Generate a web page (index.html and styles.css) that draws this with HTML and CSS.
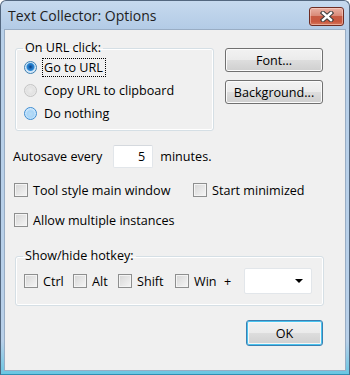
FILE: index.html
```html
<!DOCTYPE html>
<html>
<head>
<meta charset="utf-8">
<link rel="stylesheet" href="styles.css">
</head>
<body>
<div class="window">
  <div class="titlebar">
    <span class="title">Text Collector: Options</span>
    <div class="close">
      <svg width="14" height="11" viewBox="0 0 14 11">
        <path d="M3 2 L11 9 M11 2 L3 9" stroke="#3b3b3b" stroke-width="4.4" stroke-linecap="square" fill="none"/>
        <path d="M3 2 L11 9 M11 2 L3 9" stroke="#ffffff" stroke-width="2.4" stroke-linecap="square" fill="none"/>
      </svg>
    </div>
  </div>
  <div class="client">
    <div class="top">
      <fieldset class="group url">
        <legend>On URL click:</legend>
        <div class="opt"><span class="radio checked"></span><span class="focus">Go to URL</span></div>
        <div class="opt"><span class="radio faded"></span><span class="lbl">Copy URL to clipboard</span></div>
        <div class="opt"><span class="radio hover"></span><span class="lbl">Do nothing</span></div>
      </fieldset>
      <div class="btncol">
        <div class="btn">Font...</div>
        <div class="btn">Background...</div>
      </div>
    </div>
    <div class="autosave">
      <span>Autosave every</span>
      <span class="input">5</span>
      <span>minutes.</span>
    </div>
    <div class="checkrow">
      <div class="chk first"><span class="box"></span><span>Tool style main window</span></div>
      <div class="chk"><span class="box"></span><span>Start minimized</span></div>
    </div>
    <div class="checkrow second">
      <div class="chk"><span class="box"></span><span>Allow multiple instances</span></div>
    </div>
    <fieldset class="group hotkey">
      <legend>Show/hide hotkey:</legend>
      <div class="hkrow">
        <div class="chk hk w-ctrl"><span class="box"></span><span>Ctrl</span></div>
        <div class="chk hk w-alt"><span class="box"></span><span>Alt</span></div>
        <div class="chk hk w-shift"><span class="box"></span><span>Shift</span></div>
        <div class="chk hk w-win"><span class="box"></span><span>Win</span></div>
        <span class="plus">+</span>
        <div class="combo"><span class="arrow"></span></div>
      </div>
    </fieldset>
    <div class="footer">
      <div class="btn ok">OK</div>
    </div>
  </div>
</div>
</body>
</html>
```
FILE: styles.css
```css
* { box-sizing: border-box; }
html, body { margin: 0; padding: 0; background: #ffffff; }
body { font-family: "Open Sans", "Noto Sans", sans-serif; font-size: 12.6px; color: #000; }

.window {
  width: 350px;
  height: 375px;
  border: 1px solid #53677f;
  border-bottom-color: #2f8fb3;
  border-radius: 6px 6px 0 0;
  background: linear-gradient(#c6d9ee 0, #b3cbe6 28px, #b8d0e9 28px, #b8d0e9 340px, #6ac6e2 100%);
  padding: 0 3px 3px 3px;
  display: flex;
  flex-direction: column;
}

.titlebar {
  height: 28px;
  display: flex;
  align-items: center;
  justify-content: space-between;
  padding-left: 4px;
  padding-right: 2px;
}
.title { font-size: 14px; color: #1e1e1e; }
.close {
  width: 35px;
  height: 19px;
  margin-top: 2px;
  border: 1px solid #6e2c22;
  border-radius: 3px;
  background: linear-gradient(#eab1a4 0%, #d98a78 45%, #c75a43 50%, #c9583f 80%, #d77a5e 100%);
  box-shadow: inset 0 0 0 1px rgba(255,220,210,0.5);
  display: flex;
  align-items: center;
  justify-content: center;
}

.client {
  flex: 1;
  background: #f0f0f0;
  border: 1px solid #99adc4;
  padding: 10px 0 0 0;
}

.top { display: flex; align-items: flex-start; }

.group {
  margin: 0 0 0 10px;
  border: 1px solid #d5dfe5;
  border-radius: 3px;
  box-shadow: inset 0 0 0 1px #ffffff;
  padding: 0;
}
.group legend {
  padding: 0 2px;
  margin-left: -1px;
  line-height: 16px;
  color: #000;
}
.url { width: 199px; padding: 0 0 5px 8px; }

.opt { height: 23px; display: flex; align-items: center; white-space: nowrap; color: #000; }
.radio {
  width: 13px; height: 13px;
  border-radius: 50%;
  border: 1px solid #8b8b8b;
  background: radial-gradient(circle at 50% 50%, #f4f4f4 0, #e4e4e4 45%, #d2d2d2 70%, #f6f6f6 100%);
  margin-right: 5px;
  flex: none;
}
.radio.checked {
  border-color: #3c7fb1;
  background: radial-gradient(circle at 50% 45%, #0a3c78 0, #1f6fbf 2px, #2a8ad4 3.5px, #cfe4f7 4.5px, #e9f3fc 100%);
}
.radio.faded {
  border-color: #c4c4c4;
  background: radial-gradient(circle, #ececec 0, #e2e2e2 50%, #f5f5f5 100%);
}
.radio.hover {
  border-color: #3c8cd2;
  background: radial-gradient(circle at 50% 55%, #b9dcf7 0, #a9d5f6 40%, #dcefff 75%, #f0f8ff 100%);
}
.focus {
  border: 1px dotted #000;
  padding: 0 2px 0 1px;
  height: 19px;
  line-height: 17px;
  white-space: nowrap;
}
.lbl { padding-left: 2px; color: #000; }

.btncol { display: flex; flex-direction: column; gap: 8px; margin: 8px 0 0 11px; }
.btn {
  width: 98px;
  height: 24px;
  border: 1px solid #707070;
  border-radius: 3px;
  background: linear-gradient(#f2f2f2 0%, #ebebeb 48%, #dddddd 52%, #cfcfcf 100%);
  box-shadow: inset 0 0 0 1px #fbfbfb;
  display: flex;
  align-items: center;
  justify-content: center;
}

.autosave {
  display: flex;
  align-items: center;
  height: 23px;
  margin: 14px 0 0 8px;
}
.input {
  width: 40px;
  height: 23px;
  margin: 0 7px 0 11px;
  background: #ffffff;
  border: 1px solid #e2e6ea;
  border-top-color: #d5d9de;
  border-radius: 2px;
  text-align: right;
  padding-right: 7px;
  line-height: 21px;
}

.checkrow { display: flex; align-items: center; height: 20px; margin: 12px 0 0 9px; }
.checkrow.second { margin-top: 10px; }
.chk { display: flex; align-items: center; white-space: nowrap; }
.chk.first { width: 179px; }
.box {
  width: 14px; height: 14px;
  border: 1px solid #8e8f8f;
  background: linear-gradient(135deg, #d6d6d6 0%, #e9e9e9 60%, #f6f6f6 100%);
  box-shadow: inset 0 0 0 1px #f4f4f4;
  margin-right: 5px;
  flex: none;
}

.hotkey { width: 309px; padding: 4px 0 11px 8px; margin-top: 18px; }
.hkrow { display: flex; align-items: center; height: 26px; }
.w-ctrl { width: 49px; }
.w-alt { width: 45px; }
.w-shift { width: 57px; }
.w-win { width: 49px; }
.plus { width: 20px; }
.combo {
  width: 68px;
  height: 26px;
  background: #ffffff;
  border: 1px solid #e2e6ea;
  border-radius: 2px;
  display: flex;
  align-items: center;
  justify-content: flex-end;
  padding-right: 8px;
}
.arrow {
  width: 0; height: 0;
  border-left: 4px solid transparent;
  border-right: 4px solid transparent;
  border-top: 4px solid #000;
}

.footer { display: flex; justify-content: flex-end; margin: 14px 22px 0 0; }
.btn.ok {
  width: 77px;
  height: 26px;
  border: 1px solid #3c7fb1;
  box-shadow: inset 0 0 0 1px #48c3ef, inset 0 0 0 2px #f6f6f6;
}
```
